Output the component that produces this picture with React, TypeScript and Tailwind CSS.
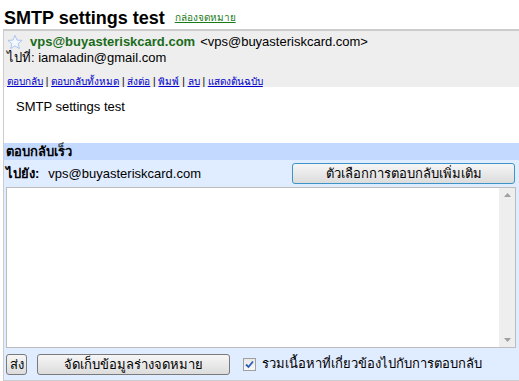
import { useState } from "react";

const LINKS = ["ตอบกลับ", "ตอบกลับทั้งหมด", "ส่งต่อ", "พิมพ์", "ลบ", "แสดงต้นฉบับ"];

function Star() {
  return (
    <svg width="16" height="16" viewBox="0 0 17 16" className="shrink-0">
      <path
        d="M8.5 1 L10.6 6 L16 6.3 L11.8 9.8 L13.2 15 L8.5 12.1 L3.8 15 L5.2 9.8 L1 6.3 L6.4 6 Z"
        fill="#f4f8ff"
        stroke="#a9c2ee"
        strokeWidth="1"
        strokeLinejoin="round"
      />
    </svg>
  );
}

export default function App() {
  const [includeQuote, setIncludeQuote] = useState(true);

  return (
    <div className="h-[381px] w-[519px] overflow-hidden bg-white font-['Liberation_Sans',sans-serif] text-[13px] text-black">
      {/* Title */}
      <div className="flex items-end gap-[10px] px-1 pt-[6px] h-[29px]">
        <h1 className="text-[18px] font-bold leading-[22px]">SMTP settings test</h1>
        <a className="mb-[4px] text-[10px] text-[#1a7a1a] underline">กล่องจดหมาย</a>
      </div>

      <div className="ml-[3px] border-l border-[#cccccc]">
        {/* Header */}
        <div className="border-t-2 border-[#cccccc] bg-[#eeeeee] px-[3px] pt-[2px] h-[58px]">
          <div className="flex items-center gap-[7px] h-[17px]">
            <Star />
            <span className="font-bold text-[#1a6b1a]">vps@buyasteriskcard.com</span>
            <span className="-ml-[2px]">&lt;vps@buyasteriskcard.com&gt;</span>
          </div>
          <div className="h-[16px] leading-[16px]">ไปที่: iamaladin@gmail.com</div>
          <div className="mt-[8px] text-[10px] text-[#0000cc]">
            {LINKS.map((l, i) => (
              <span key={l}>
                {i > 0 && <span className="text-black"> | </span>}
                <a className="underline">{l}</a>
              </span>
            ))}
          </div>
        </div>

        {/* Body */}
        <div className="h-[56px] pl-[12px] pt-[10px]">SMTP settings test</div>

        {/* Quick reply */}
        <div className="bg-[#c3d9ff] pl-[2px] h-[17px] leading-[17px] font-bold">ตอบกลับเร็ว</div>
        <div className="bg-[#e0ecff] pl-[2px] pr-[3px] pb-[3px]">
          <div className="flex items-center h-[27px]">
            <span className="font-bold">ไปยัง:</span>
            <span className="ml-[9px]">vps@buyasteriskcard.com</span>
            <button className="ml-auto mr-[1px] h-[21px] w-[223px] rounded-[3px] border border-[#3c93c8] bg-gradient-to-b from-[#f6f6f6] to-[#dcdcdc] text-[13px] leading-none">
              ตัวเลือกการตอบกลับเพิ่มเติม
            </button>
          </div>

          <div className="flex h-[161px] border border-[#bcbcbc] bg-white">
            <div className="flex-1" />
            <div className="flex w-[16px] flex-col items-center justify-between bg-[#eeeeee] py-[5px]">
              <svg width="7" height="4" viewBox="0 0 7 4">
                <path d="M0 4 L3.5 0 L7 4 Z" fill="#a0a0a0" />
              </svg>
              <svg width="7" height="4" viewBox="0 0 7 4">
                <path d="M0 0 L3.5 4 L7 0 Z" fill="#a0a0a0" />
              </svg>
            </div>
          </div>

          <div className="flex items-center gap-[10px] pt-[3px] h-[29px]">
            <button className="h-[21px] w-[21px] rounded-[3px] border border-[#7a7a7a] bg-gradient-to-b from-[#f6f6f6] to-[#dcdcdc] text-[13px] leading-none">
              ส่ง
            </button>
            <button className="h-[21px] w-[193px] rounded-[3px] border border-[#7a7a7a] bg-gradient-to-b from-[#f6f6f6] to-[#dcdcdc] text-[13px] leading-none">
              จัดเก็บข้อมูลร่างจดหมาย
            </button>
            <label className="ml-[3px] flex items-center gap-[6px]">
              <span
                onClick={() => setIncludeQuote(!includeQuote)}
                className="flex h-[13px] w-[13px] items-center justify-center border border-[#a0a0a0] bg-gradient-to-b from-[#e8e8e8] to-[#f8f8f8]"
              >
                {includeQuote && (
                  <svg width="9" height="9" viewBox="0 0 9 9">
                    <path d="M1 4.5 L3.5 7 L8 1.5" fill="none" stroke="#2c5bb8" strokeWidth="1.8" />
                  </svg>
                )}
              </span>
              <span>รวมเนื้อหาที่เกี่ยวข้องไปกับการตอบกลับ</span>
            </label>
          </div>
        </div>
        <div className="border-t border-[#cccccc]" />
      </div>
    </div>
  );
}
